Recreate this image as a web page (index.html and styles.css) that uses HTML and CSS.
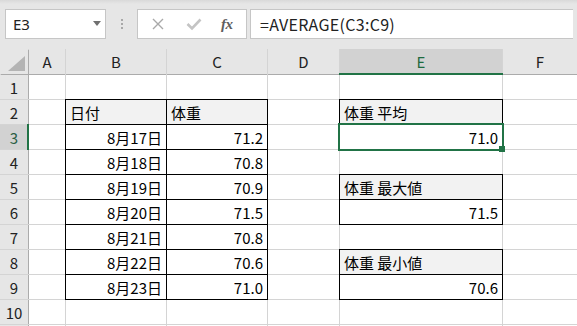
FILE: index.html
```html
<!DOCTYPE html>
<html lang="ja">
<head>
<meta charset="utf-8">
<link rel="stylesheet" href="styles.css">
</head>
<body>
<div class="app">
  <div class="toolbar">
    <div class="namebox"><span class="ref">E3</span><span class="caret"></span></div>
    <div class="grip"><i></i><i></i><i></i></div>
    <div class="fxbox">
      <svg class="ico" width="14" height="14" viewBox="0 0 14 14"><path d="M2 2 L12 12 M12 2 L2 12" stroke="#a9a9a9" stroke-width="1.4" fill="none"/></svg>
      <svg class="ico" width="16" height="14" viewBox="0 0 16 14"><path d="M1.5 7 L6 11.5 L14.5 2.5" stroke="#c4c4c4" stroke-width="2.6" fill="none"/></svg>
      <span class="fx">fx</span>
    </div>
    <div class="formula">=AVERAGE(C3:C9)</div>
  </div>
  <div class="sheet">
    <div class="corner"><span class="tri"></span></div>
    <div class="ch">A</div><div class="ch">B</div><div class="ch">C</div><div class="ch">D</div><div class="ch sel">E</div><div class="ch">F</div>

    <div class="rh">1</div><div class="c"></div><div class="c"></div><div class="c"></div><div class="c"></div><div class="c"></div><div class="c"></div>

    <div class="rh">2</div><div class="c"></div><div class="c bx hd">日付</div><div class="c bx hd">体重</div><div class="c"></div><div class="c bx hd">体重 平均</div><div class="c"></div>

    <div class="rh sel">3</div><div class="c"></div><div class="c bx r">8月17日</div><div class="c bx r">71.2</div><div class="c"></div><div class="c bx r active">71.0</div><div class="c"></div>

    <div class="rh">4</div><div class="c"></div><div class="c bx r">8月18日</div><div class="c bx r">70.8</div><div class="c"></div><div class="c"></div><div class="c"></div>

    <div class="rh">5</div><div class="c"></div><div class="c bx r">8月19日</div><div class="c bx r">70.9</div><div class="c"></div><div class="c bx hd">体重 最大値</div><div class="c"></div>

    <div class="rh">6</div><div class="c"></div><div class="c bx r">8月20日</div><div class="c bx r">71.5</div><div class="c"></div><div class="c bx r">71.5</div><div class="c"></div>

    <div class="rh">7</div><div class="c"></div><div class="c bx r">8月21日</div><div class="c bx r">70.8</div><div class="c"></div><div class="c"></div><div class="c"></div>

    <div class="rh">8</div><div class="c"></div><div class="c bx r">8月22日</div><div class="c bx r">70.6</div><div class="c"></div><div class="c bx hd">体重 最小値</div><div class="c"></div>

    <div class="rh">9</div><div class="c"></div><div class="c bx r">8月23日</div><div class="c bx r">71.0</div><div class="c"></div><div class="c bx r">70.6</div><div class="c"></div>

    <div class="rh">10</div><div class="c"></div><div class="c"></div><div class="c"></div><div class="c"></div><div class="c"></div><div class="c"></div>

    <div class="rh"></div><div class="c"></div><div class="c"></div><div class="c"></div><div class="c"></div><div class="c"></div><div class="c"></div>
  </div>
</div>
</body>
</html>
```
FILE: styles.css
```css
* { box-sizing: border-box; }
html, body { margin: 0; padding: 0; }
body { background: #fff; }
.app {
  width: 577px;
  height: 326px;
  overflow: hidden;
  background: #e6e6e6;
  font-family: "Noto Sans CJK JP", "Noto Sans", sans-serif;
}
.toolbar {
  height: 49px;
  display: flex;
  align-items: flex-start;
  padding: 9px 4px 0 5px;
  background: linear-gradient(#d9d9d9, #e6e6e6 4px);
}
.namebox {
  width: 101px;
  height: 30px;
  background: #fff;
  border: 1px solid #c6c6c6;
  display: flex;
  align-items: center;
  justify-content: space-between;
  padding: 0 4px 0 7px;
}
.ref {
  font-family: "Noto Sans", sans-serif;
  font-size: 15px;
  color: #222;
  line-height: 1;
}
.caret {
  width: 0;
  height: 0;
  border-left: 4.5px solid transparent;
  border-right: 4.5px solid transparent;
  border-top: 5px solid #707070;
  margin-top: -2px;
}
.grip {
  width: 31px;
  height: 30px;
  display: flex;
  flex-direction: column;
  align-items: center;
  justify-content: center;
  gap: 2px;
}
.grip i {
  display: block;
  width: 2px;
  height: 2px;
  background: #a8a8a8;
}
.fxbox {
  width: 110px;
  height: 30px;
  background: #fff;
  border: 1px solid #c6c6c6;
  display: flex;
  align-items: center;
  padding-left: 13px;
}
.fxbox .ico:nth-child(1) { margin-right: 21px; }
.fxbox .ico:nth-child(2) { margin-right: 19px; }
.fx {
  font-family: "Liberation Serif", serif;
  font-style: italic;
  font-weight: bold;
  font-size: 15px;
  color: #5e5e5e;
  line-height: 1;
  letter-spacing: -0.5px;
}
.formula {
  flex: 1;
  height: 30px;
  margin-left: 3px;
  background: #fff;
  border: 1px solid #c6c6c6;
  border-right: none;
  display: flex;
  align-items: center;
  padding-left: 9px;
  font-size: 16px;
  letter-spacing: 0.3px;
  color: #222;
  line-height: 1;
}
.sheet {
  display: grid;
  grid-template-columns: 28px 36px 100px 100px 71px 162px 74px;
  grid-template-rows: 25px repeat(11, 24px);
  gap: 1px;
  background: #d4d4d4;
}
.corner {
  background: #e6e6e6;
  position: relative;
  box-shadow: 1px 1px 0 #ababab;
}
.tri {
  position: absolute;
  right: 3px;
  bottom: 3px;
  width: 0;
  height: 0;
  border-left: 17px solid transparent;
  border-bottom: 15px solid #b4b4b4;
}
.ch {
  background: #e6e6e6;
  display: flex;
  align-items: center;
  justify-content: center;
  font-size: 15px;
  line-height: 1;
  color: #222;
  position: relative;
  box-shadow: 0 1px 0 #ababab;
}
.ch.sel {
  background: #d2d2d2;
  color: #1e6b3f;
}
.ch.sel::after {
  content: "";
  position: absolute;
  left: -1px;
  right: -1px;
  bottom: -1px;
  height: 2px;
  background: #217346;
}
.rh {
  background: #e6e6e6;
  display: flex;
  align-items: center;
  justify-content: center;
  font-size: 15px;
  line-height: 1;
  color: #222;
  position: relative;
  box-shadow: 1px 0 0 #ababab;
}
.rh.sel {
  background: #d2d2d2;
  color: #2c5f45;
}
.rh.sel::after {
  content: "";
  position: absolute;
  top: -1px;
  bottom: -1px;
  right: -1px;
  width: 2px;
  background: #217346;
}
.c {
  background: #fff;
  display: flex;
  align-items: center;
  padding: 0 4px;
  font-size: 15px;
  line-height: 1;
  color: #000;
  white-space: nowrap;
}
.r { justify-content: flex-end; }
.hd { background: #f2f2f2; }
.bx { box-shadow: 0 0 0 1px #000; }
.active { position: relative; }
.active::after {
  content: "";
  position: absolute;
  inset: -2px;
  border: 2px solid #217346;
}
.active::before {
  content: "";
  position: absolute;
  right: -3px;
  bottom: -3px;
  width: 6px;
  height: 6px;
  background: #217346;
  z-index: 1;
}
```
